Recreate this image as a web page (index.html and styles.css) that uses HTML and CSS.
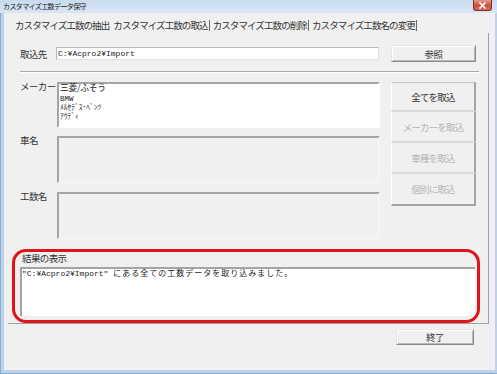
FILE: index.html
```html
<!DOCTYPE html>
<html lang="ja">
<head>
    <meta charset="UTF-8">
    <title>カスタマイズ工数データ保守</title>
    <link rel="stylesheet" href="styles.css">
</head>
<body>
    <div class="window">
        <div class="titlebar">
            <span class="title">カスタマイズ工数データ保守</span>
            <span class="close">
                <svg width="9" height="7" viewBox="0 0 9 7"><path d="M1.5 0.5 L7.5 6.5 M7.5 0.5 L1.5 6.5" stroke="#fff" stroke-width="1.6"/></svg>
            </span>
        </div>
        <div class="frame">
            <div class="client">
                <div class="tabs">
                    <span class="tab">カスタマイズ工数の抽出</span>
                    <span class="tab sep">カスタマイズ工数の取込</span>
                    <span class="tab sep">カスタマイズ工数の削除</span>
                    <span class="tab sep">カスタマイズ工数名の変更</span>
                </div>
                <div class="panel">
                    <div class="source">
                        <label class="lbl">取込先</label>
                        <div class="field">C:¥Acpro2¥Import</div>
                        <button class="btn browse">参照</button>
                    </div>
                    <div class="rule"></div>
                    <div class="main">
                        <div class="lists">
                            <div class="list-row">
                                <label class="lbl">メーカー</label>
                                <div class="listbox active h46">
                                    <div class="item big">三菱/ふそう</div>
                                    <div class="item">BMW</div>
                                    <div class="item">ﾒﾙｾﾃﾞｽ･ﾍﾞﾝﾂ</div>
                                    <div class="item">ｱｳﾃﾞｨ</div>
                                </div>
                            </div>
                            <div class="list-row gap8">
                                <label class="lbl">車名</label>
                                <div class="listbox h47"></div>
                            </div>
                            <div class="list-row gap9">
                                <label class="lbl">工数名</label>
                                <div class="listbox h47"></div>
                            </div>
                        </div>
                        <div class="stack">
                            <button class="sbtn h30">全てを取込</button>
                            <button class="sbtn h31" disabled>メーカーを取込</button>
                            <button class="sbtn h31" disabled>車種を取込</button>
                            <button class="sbtn h32 last" disabled>個別に取込</button>
                        </div>
                    </div>
                    <div class="result">
                        <div class="result-label">結果の表示</div>
                        <div class="result-box">"C:¥Acpro2¥Import" <span class="jp">にある全ての工数データを取り込みました。</span></div>
                    </div>
                </div>
                <div class="footer">
                    <button class="btn close-btn">終了</button>
                </div>
            </div>
        </div>
    </div>
</body>
</html>
```

FILE: styles.css
```css
body {
    margin: 0;
    padding: 0;
    font-family: "Noto Sans CJK JP", sans-serif;
    font-size: 9.5px;
    color: #333;
}

.window {
    width: 497px;
    height: 374px;
    display: flex;
    flex-direction: column;
    background-color: #bcd2ec;
}

.titlebar {
    height: 13px;
    display: flex;
    align-items: flex-start;
    background: linear-gradient(#c9dbef, #d9e6f4);
    flex-shrink: 0;
}

.title {
    font-size: 7px;
    line-height: 12px;
    margin-left: 3px;
    letter-spacing: -0.6px;
    color: #1a1a1a;
}

.close {
    margin-left: auto;
    margin-right: 5px;
    width: 19px;
    height: 11px;
    display: flex;
    align-items: center;
    justify-content: center;
    background: linear-gradient(#e2988c, #c8503e 55%, #d2705c);
    border: 1px solid #8a2a20;
    border-top: none;
    border-radius: 0 0 3px 3px;
    box-sizing: border-box;
}

.frame {
    flex: 1;
    display: flex;
    padding: 0 2px 3px 3px;
    border-left: 1px solid #8fa9c9;
    border-bottom: 1px solid #8fa9c9;
}

.client {
    flex: 1;
    display: flex;
    flex-direction: column;
    background-color: #f0f0f0;
}

.tabs {
    display: flex;
    align-items: center;
    height: 16px;
    margin: 4px 0 0 8px;
    letter-spacing: -0.9px;
}

.tab {
    padding: 0 1px 0 3px;
    line-height: 11px;
    white-space: nowrap;
}

.tab.sep {
    border-right: 1px solid #6a6a6a;
}

.panel {
    margin: 0 6px 0 4px;
    border-right: 1px solid #a0a0a0;
    border-bottom: 1px solid #a0a0a0;
}

.lbl {
    display: block;
    flex-shrink: 0;
    letter-spacing: -0.6px;
    line-height: 12px;
}

.source {
    display: flex;
    align-items: center;
    height: 17px;
    margin: 12px 0 0 12px;
}

.source .lbl {
    width: 36px;
}

.field {
    width: 323px;
    height: 13px;
    box-sizing: border-box;
    background-color: #fff;
    border: 1px solid #b8b8b8;
    border-right-color: #e0e0e0;
    border-bottom-color: #e0e0e0;
    font-family: "Liberation Mono", "Noto Sans CJK JP", monospace;
    font-size: 8px;
    line-height: 11px;
    padding-left: 1px;
    color: #222;
}

.btn {
    font-family: "Noto Sans CJK JP", sans-serif;
    font-size: 9.5px;
    letter-spacing: -0.6px;
    color: #333;
    background-color: #f0f0f0;
    border: 1px solid;
    border-color: #e6e6e6 #8a8a8a #8a8a8a #e6e6e6;
    box-shadow: inset 1px 1px 0 #fff, inset -1px -1px 0 #b8b8b8;
    padding: 0;
    box-sizing: border-box;
}

.browse {
    width: 85px;
    height: 17px;
    margin-left: 12px;
}

.rule {
    margin: 9px 9px 0 12px;
    border-top: 1px solid #a8a8a8;
    border-bottom: 1px solid #fff;
}

.main {
    display: flex;
    margin: 9px 0 0 12px;
}

.lists {
    width: 360px;
}

.list-row {
    display: flex;
}

.list-row .lbl {
    width: 37px;
    margin-top: -2px;
}

.gap8 {
    margin-top: 8px;
}

.gap9 {
    margin-top: 9px;
}

.listbox {
    width: 323px;
    box-sizing: border-box;
    border: 2px solid;
    border-color: #a4a4a4 #f4f4f4 #f4f4f4 #a4a4a4;
    background-color: #f0f0f0;
}

.listbox.active {
    background-color: #fff;
    border-color: #a4a4a4 #fff #fff #a4a4a4;
}

.h46 { height: 46px; }
.h47 { height: 47px; }

.item {
    font-family: "Liberation Mono", "Noto Sans CJK JP", monospace;
    font-size: 7.5px;
    line-height: 9px;
    height: 9px;
    padding-left: 1px;
    color: #222;
}

.item.big {
    font-family: "Noto Sans CJK JP", sans-serif;
    font-size: 8.8px;
    line-height: 12.5px;
    height: 12.5px;
    margin-top: -2px;
    letter-spacing: -0.3px;
}

.stack {
    display: flex;
    flex-direction: column;
    width: 85px;
    margin-left: 11px;
}

.sbtn {
    font-family: "Noto Sans CJK JP", sans-serif;
    font-size: 9.5px;
    letter-spacing: -0.8px;
    color: #333;
    background-color: #f0f0f0;
    border: none;
    border-left: 1px solid #fff;
    border-right: 2px solid #a4a4a4;
    border-bottom: 2px solid #dadada;
    padding: 0;
    box-sizing: border-box;
}

.sbtn:first-child {
    border-top: 1px solid #c4c4c4;
}

.sbtn.last {
    border-bottom: 2px solid #a4a4a4;
}

.sbtn:disabled {
    color: #b4b4b4;
}

.h30 { height: 30px; }
.h31 { height: 31px; }
.h32 { height: 32px; }

.result {
    width: 468px;
    height: 74px;
    box-sizing: border-box;
    margin: 10px 0 0 4px;
    border: 3px solid #e0141a;
    border-radius: 14px;
}

.result-label {
    line-height: 12px;
    padding-left: 7px;
    letter-spacing: -0.6px;
}

.result-box {
    height: 49px;
    margin: 3px 2px 0 5px;
    box-sizing: border-box;
    background-color: #fff;
    border-top: 2px solid #a4a4a4;
    border-left: 2px solid #a4a4a4;
    font-family: "Liberation Mono", "Noto Sans CJK JP", monospace;
    font-size: 8px;
    line-height: 10px;
    color: #222;
    white-space: nowrap;
}

.result-box .jp {
    letter-spacing: 1px;
}

.footer {
    display: flex;
    justify-content: flex-end;
    padding: 5px 21px 0 0;
}

.close-btn {
    width: 78px;
    height: 16px;
}
```
